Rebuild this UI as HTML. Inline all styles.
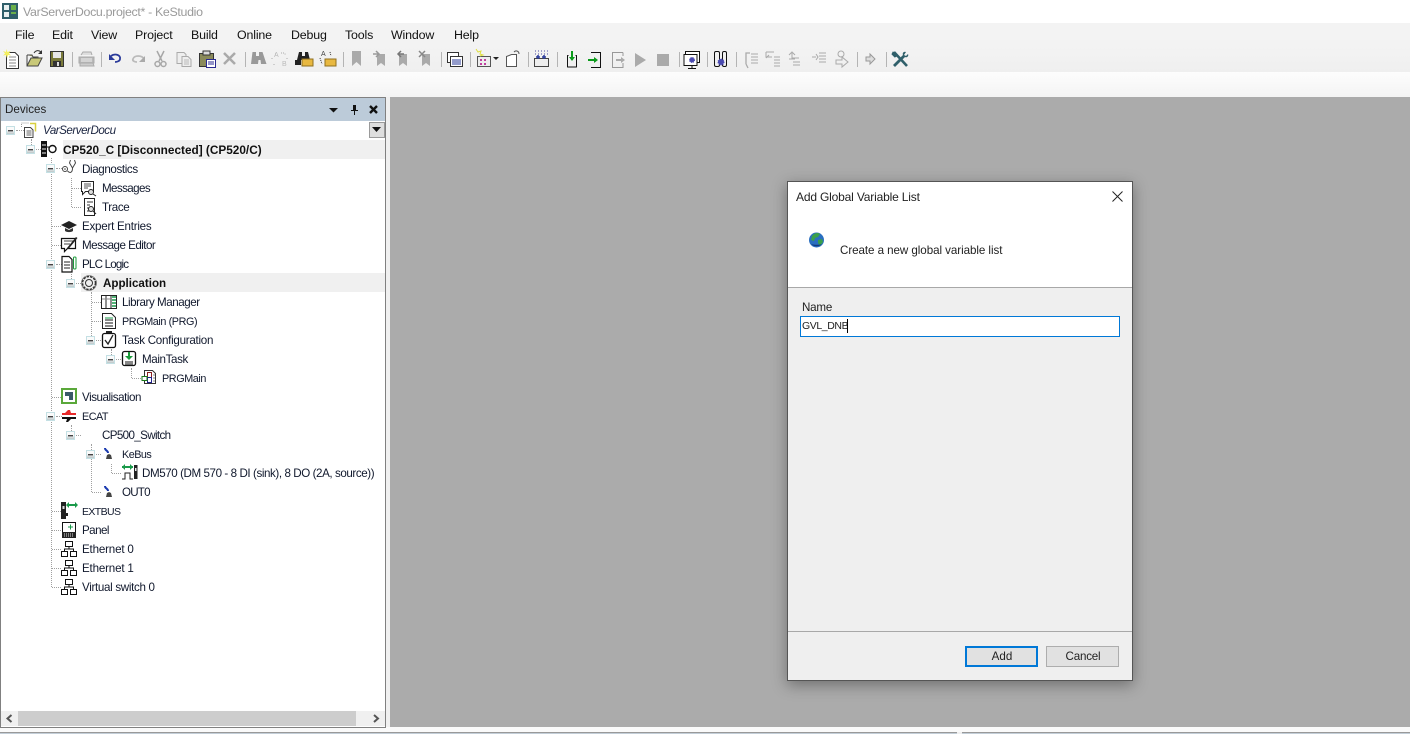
<!DOCTYPE html>
<html><head><meta charset="utf-8"><title>KeStudio</title>
<style>
html,body{margin:0;padding:0;width:1410px;height:734px;overflow:hidden;background:#f0f0f0}
body{position:relative;font-family:"Liberation Sans",sans-serif;font-size:12px;color:#000}
.a{position:absolute}
.t{position:absolute;white-space:nowrap;line-height:16px;height:16px;font-size:11.6px;color:#10182c;letter-spacing:-.38px}
.m{position:absolute;top:27px;line-height:16px;font-size:12.4px;white-space:nowrap;color:#111;letter-spacing:-.15px}
.s{position:absolute;top:52px;width:1px;height:15px;background:#b4b4b4}
.x{position:absolute;width:9px;height:9px;border:1px solid #c4e0e4;background:linear-gradient(#fafafa 45%,#bcc6c8);box-sizing:border-box}
.x:after{content:"";position:absolute;left:1px;top:3px;width:5px;height:1px;background:#444;box-shadow:0 .5px 0 #666}
.v{position:absolute;width:0;border-left:1px dotted #a0a0a0}
.h{position:absolute;height:0;border-top:1px dotted #a0a0a0}
svg{position:absolute;overflow:visible}
</style></head><body>

<!-- title -->
<div class="a" style="left:0;top:0;width:1410px;height:23px;background:#fff"></div>
<svg style="left:2px;top:3px" width="16" height="16"><rect width="16" height="16" fill="#2f5f6a"/><rect x="2" y="2" width="5" height="5" fill="#e8f0f0"/><rect x="2" y="9" width="5" height="5" fill="#e8f0f0"/><rect x="9" y="2" width="5" height="5" fill="#6ab04a"/><rect x="9" y="9" width="5" height="2" fill="#6ab04a"/></svg>
<div class="a" style="left:23px;top:4px;line-height:16px;font-size:12.4px;color:#9a9a9a;white-space:nowrap;letter-spacing:-.33px">VarServerDocu.project* - KeStudio</div>

<!-- menu -->
<div class="a" style="left:0;top:23px;width:1410px;height:24px;background:#f3f3f3"></div>
<div class="m" style="left:15px">File</div>
<div class="m" style="left:52px">Edit</div>
<div class="m" style="left:91px">View</div>
<div class="m" style="left:135px">Project</div>
<div class="m" style="left:191px">Build</div>
<div class="m" style="left:237px">Online</div>
<div class="m" style="left:291px">Debug</div>
<div class="m" style="left:345px">Tools</div>
<div class="m" style="left:391px">Window</div>
<div class="m" style="left:454px">Help</div>

<!-- toolbar -->
<div class="a" style="left:0;top:47px;width:1410px;height:25px;background:linear-gradient(#f3f3f3,#efefef)"></div>
<div class="a" style="left:0;top:72px;width:1410px;height:25px;background:linear-gradient(#fdfdfd,#f4f4f4)"></div>
<div class="s" style="left:72px"></div><div class="s" style="left:101px"></div><div class="s" style="left:245px"></div><div class="s" style="left:343px"></div><div class="s" style="left:441px"></div><div class="s" style="left:470px"></div><div class="s" style="left:528px"></div><div class="s" style="left:557px"></div><div class="s" style="left:679px"></div><div class="s" style="left:707px"></div><div class="s" style="left:736px"></div><div class="s" style="left:857px"></div><div class="s" style="left:886px"></div>

<svg style="left:0;top:46px" width="920" height="25" fill="none">
<!-- new -->
<path d="M6.500 6.500H15L18.500 10V22.500H6.500Z" stroke="#333" fill="#fff"/><path d="M9 11h7M9 14h7M9 17h7M9 20h7" stroke="#888"/><path d="M6 3l1.500 3 3-1-1.500 2.500 2 2-3-.5-1 3-1-3-3 .5 2-2L3 5l3 1z" fill="#f4f060"/>
<!-- open -->
<path d="M27 9V20H38L42 12H31L27 20" fill="#c8c878" stroke="#444"/><path d="M27 9h5l1 2h5v1" stroke="#444" fill="#b0b060"/><path d="M34 7c2-3 5-3 7-1" stroke="#333"/><path d="M42 4v4h-4z" fill="#333"/>
<!-- save -->
<rect x="50.500" y="5.500" width="13" height="15" fill="#7a7a3a" stroke="#333"/><rect x="53" y="6" width="8" height="6" fill="#e8e8e8"/><rect x="53" y="15" width="8" height="5" fill="#333"/><rect x="57" y="16" width="2" height="4" fill="#ddd"/>
<!-- print -->
<path d="M81 9l2-3h8l1 3" fill="#ddd" stroke="#aaa"/><path d="M79 11h15v6H79z" fill="#b8b8b8" stroke="#aaa"/><path d="M80 17h13l1 3H80z" fill="#ccc" stroke="#aaa"/><path d="M81 13h11M81 15h11" stroke="#eee"/>
<!-- undo/redo -->
<path d="M111 10c4-3 10-1 9 3 0 2-3 3-5 3" stroke="#2a3a9a" stroke-width="1.800"/><path d="M109 8v6h6z" fill="#2a3a9a"/>
<path d="M144 13c-2-4-10-4-11 0-1 2 2 3 4 3" stroke="#bbb" stroke-width="1.800"/><path d="M145 10v6h-6z" fill="#aaa"/>
<!-- cut -->
<path d="M157 5l5 10M164 5l-5 10" stroke="#a8a8a8" stroke-width="1.500"/><circle cx="157.500" cy="18" r="2.500" stroke="#a8a8a8" stroke-width="1.500"/><circle cx="163.500" cy="18" r="2.500" stroke="#a8a8a8" stroke-width="1.500"/>
<!-- copy -->
<path d="M177 6.500h7l2 2v9h-9z" fill="#eee" stroke="#aaa"/><path d="M182 10.500h6l3 3v7h-9z" fill="#eee" stroke="#aaa"/><path d="M184 14h5M184 16h5M184 18h5" stroke="#bbb"/>
<!-- paste -->
<path d="M199.500 7.500h14v13h-14z" fill="#8a8a5a" stroke="#333"/><rect x="203" y="5" width="7" height="4" fill="#ddd" stroke="#333"/><rect x="206.500" y="13.500" width="9" height="8" fill="#fff" stroke="#2a2a90"/><path d="M208 16h6M208 18h6" stroke="#2a2a90"/>
<!-- delete -->
<path d="M224 7l11 11M235 7l-11 11" stroke="#aaa" stroke-width="2.500"/>
<!-- find -->
<path d="M252.500 6h3.500v4h3v-4h3.500l4 12h-5.500l-.5-4h-2l-.5 4H251z" fill="#999"/>
<path d="M275 8h2M272 12v2M274 18v1M281 7h3l2 2M287 12v2" stroke="#aaa" stroke-dasharray="1 1"/><text x="282" y="20" font-size="7" fill="#bbb" font-family="Liberation Sans">B</text><text x="274" y="11" font-size="7" fill="#bbb" font-family="Liberation Sans">A</text>
<path d="M299 6h3v4h3v-4h3l2 8h-13z" fill="#222"/><path d="M295 14h6v5h-6z" fill="#222"/><path d="M302 13h11v7h-11z" fill="#e8b840" stroke="#907020"/>
<text x="321" y="10" font-size="7" fill="#444" font-family="Liberation Sans">A</text><path d="M320 12l2 6M330 6l1 4" stroke="#333" stroke-dasharray="1 1"/><path d="M325 13h11v7h-11z" fill="#e8b840" stroke="#907020"/>
<!-- bookmarks -->
<path d="M352 5h9v15l-4.500-4-4.500 4z" fill="#aaa"/><path d="M377 8h8v12l-4-3-4 3z" fill="#aaa"/><path d="M373 8h6M376 5l3 3-3 3" stroke="#999" stroke-width="1.500"/><path d="M399 8h8v12l-4-3-4 3z" fill="#aaa"/><path d="M404 8h-6M401 5l-3 3 3 3" stroke="#777" stroke-width="1.500"/><path d="M422 8h8v12l-4-3-4 3z" fill="#aaa"/><path d="M419 5l6 6M425 5l-6 6" stroke="#888" stroke-width="1.500"/>
<!-- windows -->
<path d="M447.500 6.500h11v10h-11z" fill="#fff" stroke="#333"/><path d="M450.500 10.500h12v10h-12z" fill="#fff" stroke="#333"/><path d="M452 14h9M452 16h9M452 18h9" stroke="#2a3a9a"/>
<path d="M477.500 10.500h13v10h-13z" fill="#eee" stroke="#555"/><path d="M480 13h2v2h-2zM484 13h2v2h-2zM480 17h2v2h-2zM484 17h2v2h-2z" fill="#c040a0"/><path d="M476 3l2 3 3-1-1 3 3 1-3 1" stroke="#e0e040"/><path d="M493 11h6l-3 3z" fill="#222"/>
<path d="M506.500 10.500l5-2h5v12h-10z" fill="#fff" stroke="#555"/><path d="M514 6c2-2 5-1 5 2" stroke="#555"/>
<rect x="534.500" y="12.500" width="14" height="8" fill="#eee" stroke="#444"/><path d="M535 5h13M535 8h13" stroke="#4a4aa0" stroke-dasharray="1 2"/><path d="M538 9v4M544 9v4M536 11h4M542 11h4" stroke="#2a3a9a" stroke-width="1.500"/>
<!-- login etc -->
<path d="M568.500 9.500h-1v11.500h9V9.500h-1" stroke="#111" stroke-linejoin="round"/><path d="M572 5v9" stroke="#0a9a1a" stroke-width="2"/><path d="M569 11h6l-3 4z" fill="#0a9a1a"/>
<path d="M591 6.500h9.500v15H591" stroke="#111"/><path d="M588 14h7" stroke="#0a9a1a" stroke-width="2"/><path d="M594 11v6l4-3z" fill="#0a9a1a"/>
<path d="M623 6.500h-10.500v15H623V17M623 10V6.500" stroke="#999"/><path d="M616 14h6" stroke="#aaa" stroke-width="2"/><path d="M621 11v6l4-3z" fill="#aaa"/>
<path d="M635 7l11 7-11 7z" fill="#aaa"/><rect x="657" y="8" width="12" height="12" fill="#aaa"/>
<!-- monitor -->
<path d="M685.500 5.500h14v11h-14z" stroke="#111" fill="#fff"/><path d="M684 8.500h13v11h-13z" stroke="#111" fill="#fff"/><circle cx="692" cy="14" r="2.500" fill="#4a4ab0" stroke="#4a4ab0" stroke-dasharray="1 1"/><path d="M692 20v2M688 22.500h8" stroke="#111"/>
<rect x="714.500" y="5.500" width="5" height="15" rx="1.500" stroke="#111"/><rect x="722.500" y="5.500" width="4" height="15" rx="1.500" stroke="#111"/><circle cx="721" cy="16" r="3" fill="#4a4ab0" stroke="#4a4ab0" stroke-dasharray="1 1"/>
<!-- step -->
<path d="M746 18V7h4M746 18l2 4" stroke="#aaa" stroke-width="1.300"/><path d="M751 8h7M751 11h7M751 14h7M751 17h7" stroke="#aaa"/><path d="M766 6h8M766 6v5h6M769 9l-3 3" stroke="#aaa"/><path d="M774 11h6M774 14h6M774 17h6M774 20h6" stroke="#aaa"/><path d="M789 9l3-3 3 3M792 7v5h7" stroke="#aaa"/><path d="M789 13h6M793 16h7M793 19h7" stroke="#aaa" /><path d="M812 11h4M816 8l2 3-2 3" stroke="#aaa"/><path d="M819 7h7M819 10h7M819 13h7M819 16h7" stroke="#aaa"/><circle cx="841" cy="8" r="3" stroke="#aaa"/><path d="M836 14h6v-3l6 5-6 5v-3h-6z" stroke="#aaa"/>
<path d="M866 11h4V8l5 5-5 5v-3h-4z" fill="#ddd" stroke="#999"/>
<!-- tools -->
<path d="M894 6l13 14M894 6l-1 2 2 2 2-1" stroke="#2f5f6a" stroke-width="2.600"/><path d="M906 6c-2-1-4 1-3 3l-10 10 2 2 10-10c2 1 4-1 3-3l-2 2-2-1z" fill="#2f5f6a"/>
</svg>

<!-- main -->
<div class="a" style="left:390px;top:97px;width:1020px;height:630px;background:#ababab"></div>
<div class="a" style="left:0;top:727px;width:1410px;height:5px;background:#fafafa"></div>
<div class="a" style="left:0;top:732px;width:957px;height:2px;background:#c3ced8;border-top:1px solid #999;box-sizing:border-box"></div>
<div class="a" style="left:962px;top:732px;width:448px;height:2px;background:#c3ced8;border-top:1px solid #999;box-sizing:border-box"></div>

<!-- devices panel -->
<div class="a" style="left:0;top:97px;width:386px;height:631px;background:#fff;border:1px solid #808080;box-sizing:border-box"></div>
<div class="a" style="left:1px;top:98px;width:384px;height:23px;background:#bccbd9"></div>
<div class="a" style="left:5px;top:102px;line-height:16px;font-size:11.6px;color:#222">Devices</div>
<svg style="left:328px;top:103px" width="52" height="14"><path d="M1 5h9l-4.500 4.500z" fill="#111"/><path d="M23 2h5v5h2v1h-3v4h-1V8h-3V7h2V2z" fill="#111" stroke="none"/><path d="M42 3l7 7M49 3l-7 7" stroke="#111" stroke-width="2.400"/></svg>
<div class="a" style="left:369px;top:122px;width:16px;height:16px;background:#dedede;border:1px solid #9a9a9a;box-sizing:border-box"></div>
<svg style="left:372px;top:127px" width="10" height="6"><path d="M0 0h9L4.500 5z" fill="#111"/></svg>

<div class="a" style="left:63px;top:140px;width:322px;height:19px;background:#f0f0f0"></div>
<div class="a" style="left:81px;top:273px;width:304px;height:19px;background:#f0f0f0"></div>

<!-- tree lines -->
<div class="v" style="left:51px;top:158px;height:429px"></div>
<div class="v" style="left:31px;top:139px;height:6px"></div>
<div class="v" style="left:71px;top:178px;height:29px"></div>
<div class="v" style="left:71px;top:274px;height:5px"></div>
<div class="v" style="left:91px;top:292px;height:44px"></div>
<div class="v" style="left:111px;top:349px;height:6px"></div>
<div class="v" style="left:131px;top:368px;height:10px"></div>
<div class="v" style="left:71px;top:425px;height:6px"></div>
<div class="v" style="left:91px;top:444px;height:48px"></div>
<div class="v" style="left:111px;top:464px;height:9px"></div>
<div class="h" style="left:16px;top:130px;width:8px"></div>
<div class="h" style="left:36px;top:149px;width:5px"></div>
<div class="h" style="left:56px;top:168px;width:6px"></div>
<div class="h" style="left:72px;top:188px;width:9px"></div>
<div class="h" style="left:72px;top:207px;width:9px"></div>
<div class="h" style="left:52px;top:226px;width:9px"></div>
<div class="h" style="left:52px;top:245px;width:9px"></div>
<div class="h" style="left:56px;top:264px;width:6px"></div>
<div class="h" style="left:76px;top:283px;width:5px"></div>
<div class="h" style="left:92px;top:302px;width:9px"></div>
<div class="h" style="left:92px;top:321px;width:9px"></div>
<div class="h" style="left:96px;top:340px;width:5px"></div>
<div class="h" style="left:116px;top:359px;width:5px"></div>
<div class="h" style="left:132px;top:378px;width:9px"></div>
<div class="h" style="left:52px;top:397px;width:9px"></div>
<div class="h" style="left:56px;top:416px;width:6px"></div>
<div class="h" style="left:76px;top:435px;width:5px"></div>
<div class="h" style="left:96px;top:454px;width:5px"></div>
<div class="h" style="left:112px;top:473px;width:9px"></div>
<div class="h" style="left:92px;top:492px;width:9px"></div>
<div class="h" style="left:52px;top:511px;width:9px"></div>
<div class="h" style="left:52px;top:530px;width:9px"></div>
<div class="h" style="left:52px;top:549px;width:9px"></div>
<div class="h" style="left:52px;top:568px;width:9px"></div>
<div class="h" style="left:52px;top:587px;width:9px"></div>

<!-- expanders -->
<div class="x" style="left:6px;top:126px"></div>
<div class="x" style="left:26px;top:145px"></div>
<div class="x" style="left:46px;top:164px"></div>
<div class="x" style="left:46px;top:260px"></div>
<div class="x" style="left:66px;top:279px"></div>
<div class="x" style="left:86px;top:336px"></div>
<div class="x" style="left:106px;top:355px"></div>
<div class="x" style="left:46px;top:412px"></div>
<div class="x" style="left:66px;top:431px"></div>
<div class="x" style="left:86px;top:450px"></div>

<!-- tree text -->
<div class="t" style="left:43px;top:123px;font-style:italic;color:#1a2440;letter-spacing:-.48px">VarServerDocu</div>
<div class="t" style="left:63px;top:142px;font-weight:bold;color:#111;font-size:11.800px;letter-spacing:0">CP520_C [Disconnected] (CP520/C)</div>
<div class="t" style="left:82px;top:161.500px">Diagnostics</div>
<div class="t" style="left:102px;top:181px;letter-spacing:-.6px">Messages</div>
<div class="t" style="left:102px;top:200px">Trace</div>
<div class="t" style="left:82px;top:219px;letter-spacing:-.24px">Expert Entries</div>
<div class="t" style="left:82px;top:238px;letter-spacing:-.52px">Message Editor</div>
<div class="t" style="left:82px;top:257px;letter-spacing:-.8px">PLC Logic</div>
<div class="t" style="left:103px;top:276px;font-weight:bold;color:#111;letter-spacing:0">Application</div>
<div class="t" style="left:122px;top:295px;letter-spacing:-.45px">Library Manager</div>
<div class="t" style="left:122px;top:314px;font-size:10.800px;letter-spacing:-.4px">PRGMain (PRG)</div>
<div class="t" style="left:122px;top:333px;letter-spacing:-.27px">Task Configuration</div>
<div class="t" style="left:142px;top:352px">MainTask</div>
<div class="t" style="left:162px;top:371px;font-size:10.800px;letter-spacing:-.4px">PRGMain</div>
<div class="t" style="left:82px;top:390px;letter-spacing:-.45px">Visualisation</div>
<div class="t" style="left:82px;top:409px;font-size:10.800px;letter-spacing:-.5px">ECAT</div>
<div class="t" style="left:102px;top:428px;letter-spacing:-.63px">CP500_Switch</div>
<div class="t" style="left:122px;top:447px;font-size:10.800px;letter-spacing:-.5px">KeBus</div>
<div class="t" style="left:142px;top:466px;letter-spacing:-.42px">DM570 (DM 570 - 8 DI (sink), 8 DO (2A, source))</div>
<div class="t" style="left:122px;top:485px;letter-spacing:-.8px">OUT0</div>
<div class="t" style="left:82px;top:504px;font-size:10.500px;letter-spacing:-.6px">EXTBUS</div>
<div class="t" style="left:82px;top:523px;letter-spacing:-.55px">Panel</div>
<div class="t" style="left:82px;top:542px;letter-spacing:-.18px">Ethernet 0</div>
<div class="t" style="left:82px;top:561px;letter-spacing:-.18px">Ethernet 1</div>
<div class="t" style="left:82px;top:580px;letter-spacing:-.32px">Virtual switch 0</div>

<!-- tree icons -->
<svg style="left:0;top:0" width="390" height="620" fill="none">
<path d="M21.500 127v-4h8" stroke="#999" stroke-dasharray="1 1"/><path d="M30 123.500h5.500v8" stroke="#d8d040" stroke-width="1.500"/><path d="M24.500 127.500h6l2.500 2.500v7.500h-8.500z" fill="#fff" stroke="#444"/><path d="M26.500 131h5M26.500 133h5M26.500 135h5" stroke="#666"/>
<rect x="41" y="141" width="6" height="16" fill="#111"/><path d="M42 145h4M42 149h4M42 153h4" stroke="#eee"/><path d="M47 147h2" stroke="#111"/><circle cx="52.500" cy="149" r="3.500" stroke="#111" stroke-width="1.400"/>
<!-- stethoscope -->
<circle cx="65" cy="169" r="2.500" stroke="#444"/><circle cx="65" cy="169" r=".8" fill="#444"/><path d="M67.500 171c3 3 5 1 5-3l-3-5 1-3M72.500 168l3-5-1-3" stroke="#444"/>
<!-- messages -->
<path d="M81.500 181.500h12v10h-8l-3 3v-3h-1z" fill="#fff" stroke="#222"/><path d="M84 184h7M84 186h7M84 188h4" stroke="#555"/><circle cx="91" cy="192" r="2.500" stroke="#222" fill="#ddd"/><path d="M93 194l3 2" stroke="#222"/>
<path d="M84.500 198.500h10v17h-10z" fill="#fff" stroke="#222"/><path d="M87 202h6M87 205h3M87 208h3M87 211h3" stroke="#333"/><circle cx="91" cy="209" r="2.500" stroke="#222" fill="#ddd"/><path d="M93 211l3 3" stroke="#222"/>
<!-- expert -->
<path d="M61 225l8-4 8 4-8 4z" fill="#222"/><path d="M65 228v3c2 1.500 6 1.500 8 0v-3l-4 2z" fill="#333"/>
<!-- message editor -->
<path d="M61.500 238.500h14v10h-8l-3 3v-3h-3z" fill="#fff" stroke="#111" stroke-width="1.200"/><path d="M64 241h9M64 244h6" stroke="#444"/><path d="M67 248l9-11 1.500 1-9 11z" fill="#222"/>
<!-- plc -->
<path d="M62 256.500h7l3 3v12.500h-10z" fill="#fff" stroke="#111" stroke-width="1.200"/><path d="M64 262h6M64 265h6M64 268h6" stroke="#222"/><rect x="73.500" y="257" width="2.500" height="12" rx="1" stroke="#1a9a3a"/>
<!-- gear -->
<circle cx="89" cy="283" r="6.500" stroke="#333" stroke-width="1.500" stroke-dasharray="2.500 1"/><circle cx="89" cy="283" r="3.500" stroke="#333"/><circle cx="89" cy="283" r="7.500" stroke="#555" stroke-width=".6"/>
<!-- library -->
<path d="M101.500 295.500h15v13h-15z" fill="#fff" stroke="#222"/><path d="M106 295v13M111 295v13" stroke="#222"/><path d="M112 297h4M112 300h4M112 303h4M112 306h4" stroke="#1a9a4a" stroke-width="1.600"/><path d="M102 299h4M107 299h4" stroke="#888"/>
<!-- prg -->
<path d="M102.500 313.500h9l4 4v11h-13z" fill="#fff" stroke="#222"/><path d="M105 318h8" stroke="#1a9a4a"/><path d="M105 320h8M105 323h8M105 326h8" stroke="#111"/>
<!-- task -->
<rect x="102.500" y="333.500" width="13" height="14" rx="2" stroke="#111" fill="#fff" stroke-width="1.300"/><rect x="106" y="331" width="6" height="2" fill="#222"/><path d="M105 340l3 4 5-9" stroke="#222" stroke-width="1.300"/>
<!-- maintask -->
<rect x="122.500" y="351.500" width="13" height="14" rx="2" stroke="#111" fill="#fff" stroke-width="1.300"/><path d="M129 352v5" stroke="#1a9a3a" stroke-width="2"/><path d="M125 356h8l-4 4z" fill="#1a9a3a"/><path d="M125 362h8M125 364h8" stroke="#111"/>
<!-- prgmain call -->
<path d="M144.500 370.500h8l3 3v10h-11z" fill="#fff" stroke="#333"/><rect x="147.500" y="372.500" width="4" height="5" stroke="#8a2020"/><rect x="147.500" y="377.500" width="4" height="5" stroke="#20208a"/><rect x="142" y="376.500" width="5" height="4" fill="#fff" stroke="#1a7a1a"/><path d="M153 375h2M153 378h2M153 381h2" stroke="#888"/>
<!-- visu -->
<rect x="62" y="389" width="14" height="14" fill="#fff" stroke="#5aa83a" stroke-width="2"/><path d="M65 392h8v8h-4v-4h-4z" fill="#3a5a68"/><path d="M65 393h5v2h-5z" fill="#3a5a68"/>
<!-- ecat -->
<path d="M62 415h14v-2h-5l-1-3h-2l-3 3h-3z" fill="#e82a2a"/><path d="M62 417h14v2h-5l-3 3h-2l1-3h-5z" fill="#111"/>
<!-- buses -->
<path d="M105 448c0 3 3 2 3 5" stroke="#1a3ab0" stroke-width="2"/><path d="M107 455l2-1 2 1 1 4h-6z" fill="#444"/>
<path d="M105 486c0 3 3 2 3 5" stroke="#1a3ab0" stroke-width="2"/><path d="M107 493l2-1 2 1 1 4h-6z" fill="#444"/>
<!-- dm570 -->
<path d="M122 467h11" stroke="#1a9a4a" stroke-width="2"/><path d="M125 464v6l-3-3zM130 464v6l3-3z" fill="#1a9a4a"/><path d="M122 479h3v-6h5v6h3" stroke="#222"/><rect x="134" y="465" width="3.500" height="14" fill="#222"/><rect x="135" y="468" width="1.500" height="3" fill="#eee"/>
<!-- extbus -->
<rect x="61" y="502" width="5" height="17" fill="#222"/><rect x="66" y="513" width="2" height="3" fill="#222"/><rect x="62.500" y="506" width="2" height="3" fill="#ddd"/><path d="M67 505h10" stroke="#1a9a4a" stroke-width="2"/><path d="M69 502v6l-3-3zM75 502v6l3-3z" fill="#1a9a4a"/>
<!-- panel -->
<rect x="62.500" y="522.500" width="13" height="15" stroke="#111" fill="#fff"/><rect x="62" y="532" width="14" height="6" fill="#222"/><path d="M64 534h10M64 536h10" stroke="#ddd" stroke-dasharray="1 1"/><path d="M68 527h5M70.500 524.500v5" stroke="#1a9a4a"/>
<!-- ethernet -->
<path d="M65.500 541.500h7v5h-7zM61.500 551.500h6v5h-6zM70.500 551.500h6v5h-6zM69 547v2M64.500 551v-2h9v2" stroke="#111"/>
<path d="M65.500 560.500h7v5h-7zM61.500 570.500h6v5h-6zM70.500 570.500h6v5h-6zM69 566v2M64.500 570v-2h9v2" stroke="#111"/>
<path d="M65.500 579.500h7v5h-7zM61.500 589.500h6v5h-6zM70.500 589.500h6v5h-6zM69 585v2M64.500 589v-2h9v2" stroke="#111"/>
</svg>

<!-- scrollbar -->
<div class="a" style="left:1px;top:711px;width:384px;height:15px;background:#f0f0f0"></div>
<div class="a" style="left:18px;top:711px;width:338px;height:15px;background:#cdcdcd"></div>
<svg style="left:5px;top:714px" width="375" height="10" fill="none"><path d="M6.500 1L2.500 4.500 6.500 8" stroke="#555" stroke-width="2"/><path d="M369 1l4 3.500-4 3.500" stroke="#555" stroke-width="2"/></svg>

<!-- dialog -->
<div class="a" style="left:787px;top:181px;width:346px;height:500px;background:#efefef;border:1px solid #555;box-sizing:border-box;box-shadow:0 4px 14px rgba(0,0,0,.35)"></div>
<div class="a" style="left:788px;top:182px;width:344px;height:105px;background:#fff"></div>
<div class="a" style="left:788px;top:287px;width:344px;height:1px;background:#a8a8a8"></div>
<div class="a" style="left:788px;top:631px;width:344px;height:1px;background:#a8a8a8"></div>
<div class="a" style="left:796px;top:189px;line-height:16px;font-size:12px;color:#222;white-space:nowrap;letter-spacing:-.17px">Add Global Variable List</div>
<svg style="left:1112px;top:191px" width="12" height="12" fill="none"><path d="M.5.500l10 10M10.500.500l-10 10" stroke="#222"/></svg>
<svg style="left:808px;top:231px" width="18" height="18"><circle cx="8.500" cy="9" r="7.500" fill="#2a6fc0"/><path d="M4 5c2-3 6-4 8-2l-2 3-3 1-1 3-3-1zM10 9l4-1 1 3-3 4-2-3z" fill="#3aa04a"/><path d="M3 13c3 3 8 3 11 0-2 1-8 1-11 0z" fill="#123a80"/></svg>
<div class="a" style="left:840px;top:243px;line-height:16px;font-size:11.600px;color:#222;white-space:nowrap;letter-spacing:-.06px">Create a new global variable list</div>
<div class="a" style="left:802px;top:300px;line-height:16px;font-size:11.600px;color:#222;letter-spacing:-.2px">Name</div>
<div class="a" style="left:800px;top:316px;width:320px;height:21px;background:#fff;border:1px solid #0078d7;box-sizing:border-box"></div>
<div class="a" style="left:802px;top:318px;line-height:16px;font-size:10.500px;color:#222;letter-spacing:-.4px;white-space:nowrap">GVL_DNB</div>
<div class="a" style="left:847px;top:319px;width:1px;height:14px;background:#000"></div>
<div class="a" style="left:965px;top:646px;width:73px;height:21px;background:#e1e1e1;border:2px solid #0078d7;box-sizing:border-box;text-align:center;line-height:17px;font-size:11.600px;color:#222;padding-left:1px">Add</div>
<div class="a" style="left:1046px;top:646px;width:73px;height:21px;background:#e1e1e1;border:1px solid #adadad;box-sizing:border-box;text-align:center;line-height:19px;font-size:11.600px;color:#222;padding-left:1px;letter-spacing:-.2px">Cancel</div>
</body></html>
